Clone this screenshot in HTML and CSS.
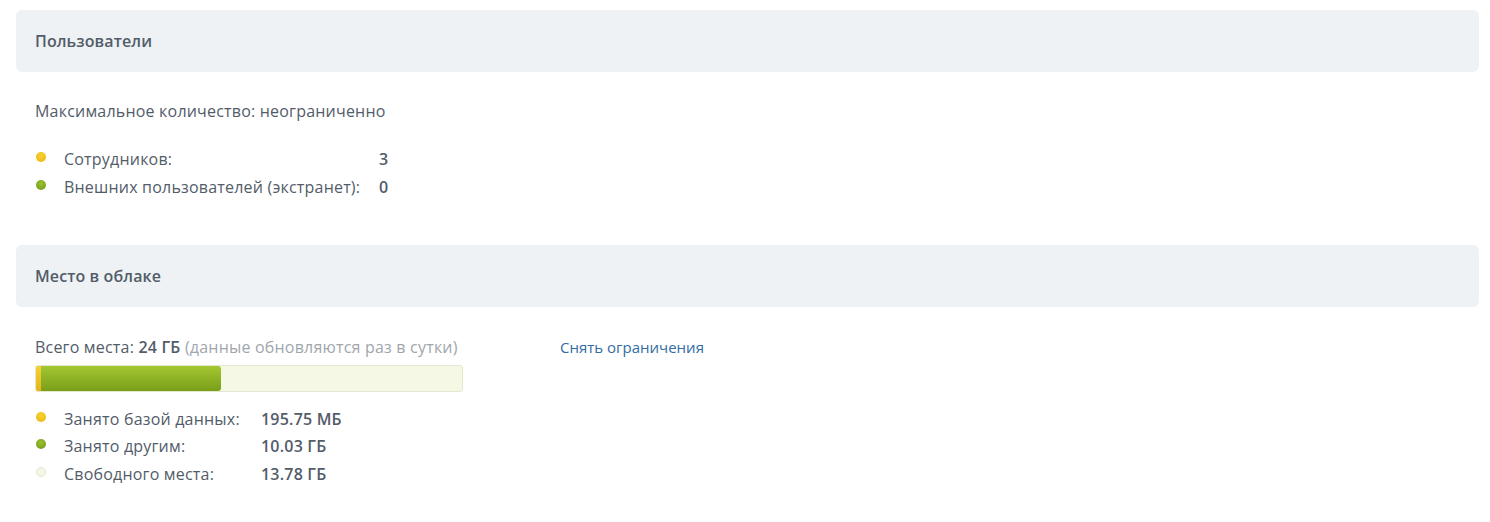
FILE: index.html
```html
<!DOCTYPE html>
<html>
<head>
    <title>Лицензия</title>
    <link rel="stylesheet" href="styles.css">
</head>
<body>
    <div class="section">
        <div class="section-title">Пользователи</div>
        <div class="section-body">
            <div class="info-line">Максимальное количество: неограниченно</div>
            <table class="stats users">
                <tr>
                    <td class="dot-cell"><span class="dot yellow"></span></td>
                    <td class="label">Сотрудников:</td>
                    <td class="value">3</td>
                </tr>
                <tr>
                    <td class="dot-cell"><span class="dot green"></span></td>
                    <td class="label">Внешних пользователей (экстранет):</td>
                    <td class="value">0</td>
                </tr>
            </table>
        </div>
    </div>

    <div class="section">
        <div class="section-title">Место в облаке</div>
        <div class="section-body disk">
            <div class="disk-left">
                <div class="info-line total">Всего места: <b>24 ГБ</b> <span class="note">(данные обновляются раз в сутки)</span></div>
                <div class="bar">
                    <div class="bar-db" style="width: 5px"></div>
                    <div class="bar-other" style="width: 180px"></div>
                </div>
                <table class="stats space">
                    <tr>
                        <td class="dot-cell"><span class="dot yellow"></span></td>
                        <td class="label">Занято базой данных:</td>
                        <td class="value">195.75 МБ</td>
                    </tr>
                    <tr>
                        <td class="dot-cell"><span class="dot green"></span></td>
                        <td class="label">Занято другим:</td>
                        <td class="value">10.03 ГБ</td>
                    </tr>
                    <tr>
                        <td class="dot-cell"><span class="dot free"></span></td>
                        <td class="label">Свободного места:</td>
                        <td class="value">13.78 ГБ</td>
                    </tr>
                </table>
            </div>
            <a class="link" href="#">Снять ограничения</a>
        </div>
    </div>
</body>
</html>
```

FILE: styles.css
```css
body {
    margin: 0;
    padding: 10px 11px 0 16px;
    font-family: "Open Sans", Arial, sans-serif;
    font-size: 16px;
    letter-spacing: 0.2px;
    color: #535c69;
    background: #fff;
}
.section-title {
    height: 62px;
    line-height: 62px;
    padding: 0 19px;
    background-color: #eef2f4;
    border-radius: 6px;
    font-weight: 600;
    font-size: 16px;
    letter-spacing: 0.1px;
}
.section-body {
    padding: 27px 19px 44px;
}
.info-line {
    line-height: 24px;
}
.stats {
    border-collapse: collapse;
    margin-top: 22px;
}
.stats td {
    padding: 0;
    height: 28px;
    vertical-align: middle;
}
.dot-cell {
    width: 29px;
}
.dot {
    display: block;
    width: 10px;
    height: 10px;
    border-radius: 50%;
    margin: -4px 0 0 1px;
}
.dot.yellow {
    background: radial-gradient(circle at 50% 35%, #f6d32f, #e8b410);
}
.dot.green {
    background: radial-gradient(circle at 50% 35%, #9cc02d, #6e981a);
}
.dot.free {
    background: #f4f7e4;
    border: 1px solid #e2e6cf;
    width: 8px;
    height: 8px;
}
.value {
    font-weight: 600;
}
.users .label {
    width: 315px;
}
.space .label {
    width: 197px;
}
.space {
    margin-top: 13px;
}
.space td {
    height: 27.5px;
}
.disk {
    display: flex;
    align-items: flex-start;
    padding-top: 28px;
}
.disk-left {
    width: 428px;
}
.total b {
    font-weight: 600;
}
.note {
    color: #a1a6ac;
}
.bar {
    display: flex;
    height: 25px;
    margin-top: 6px;
    background-color: #f4f8e4;
    border: 1px solid #e3e7cd;
    border-radius: 3px;
    overflow: hidden;
}
.bar-db {
    background: linear-gradient(#f3d237, #e3b51a);
}
.bar-other {
    background: linear-gradient(#a4c832, #8cb024 55%, #7a9f1a);
    border-radius: 0 3px 3px 0;
}
.link {
    margin-left: 97px;
    margin-top: 0;
    font-size: 15px;
    letter-spacing: 0;
    line-height: 24px;
    color: #336ca3;
    text-decoration: none;
}
```
